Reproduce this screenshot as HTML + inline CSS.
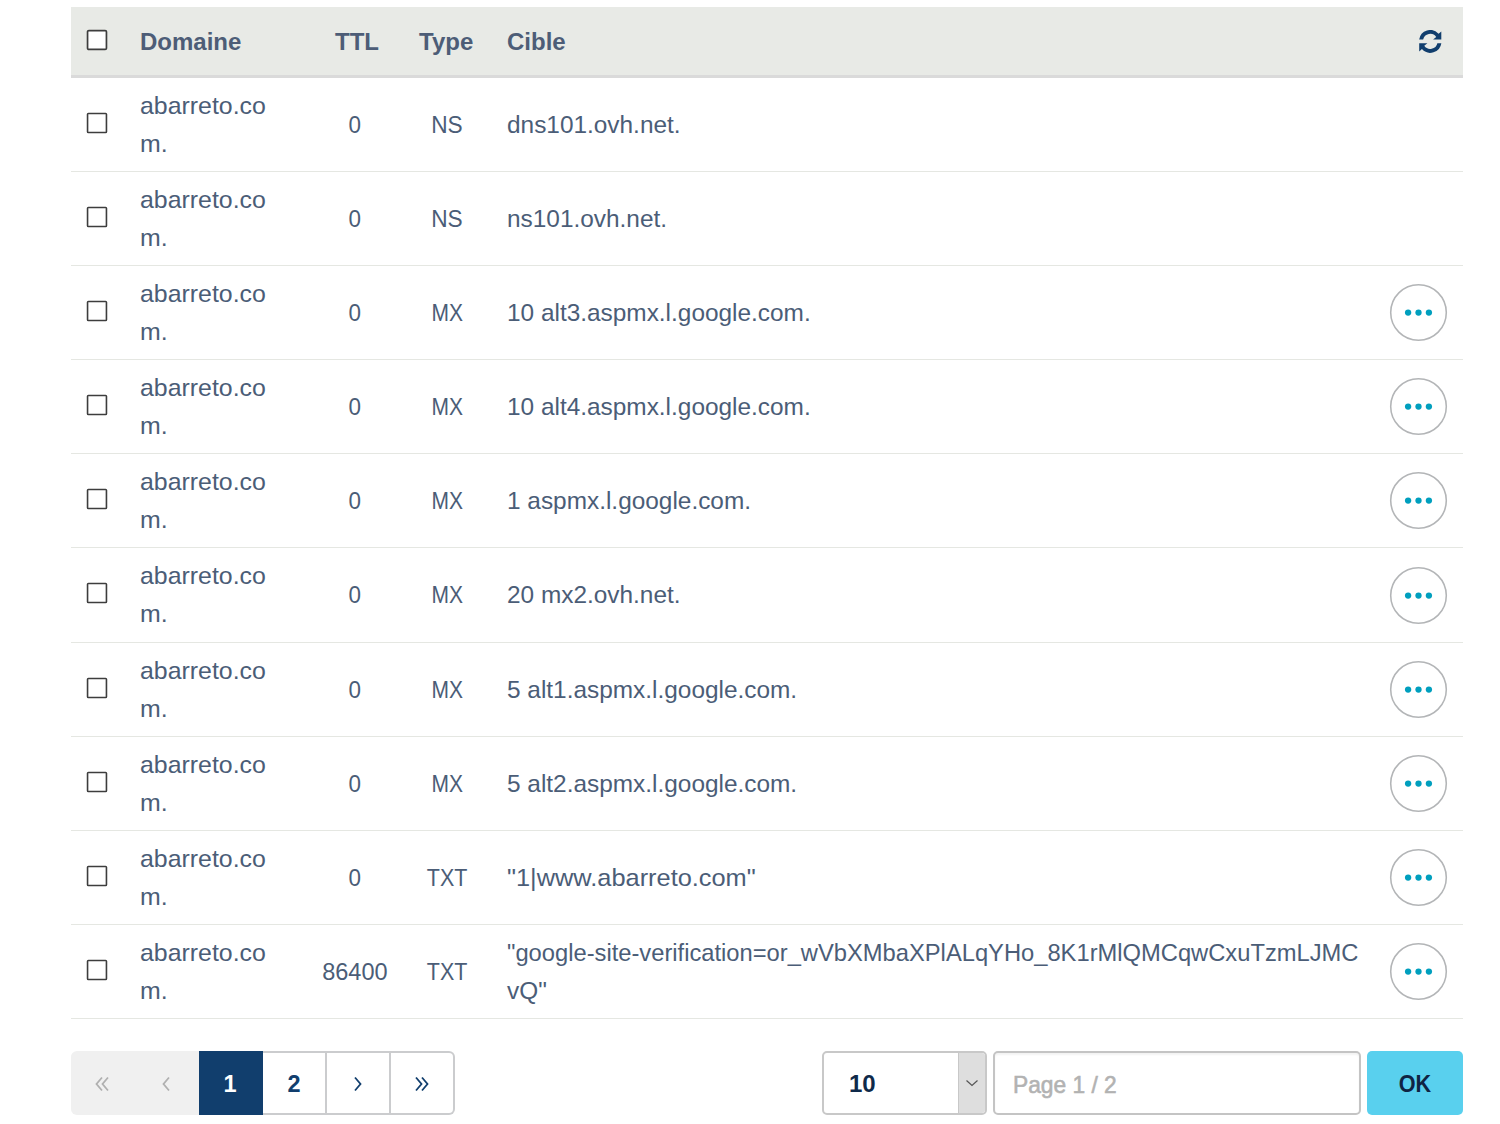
<!DOCTYPE html>
<html><head><meta charset="utf-8">
<style>
*{box-sizing:border-box;margin:0;padding:0}
html,body{width:1500px;height:1124px;background:#fff;overflow:hidden;font-family:"Liberation Sans",sans-serif;position:relative}
.hdr{position:absolute;left:71px;top:7px;width:1392px;height:71px;background:#e8eae6;border-bottom:3px solid #dadada}
.hdr .t{position:absolute;top:23px;font-weight:bold;font-size:24px;color:#4d5d77;line-height:24px;white-space:nowrap}
.hdr .cbs{left:14.05px}
.ref{position:absolute;left:1347.7px;top:23.3px}
.line{position:absolute;left:71px;width:1392px;height:1px;background:#e5e7e2}
.cbs{position:absolute;left:85.05px}
.txt{position:absolute;font-size:24.4px;color:#4b5d77;white-space:nowrap}
.d{left:140px;line-height:38.4px;transform-origin:0 0;transform:scaleX(1.02)}
.n{line-height:26px;text-align:center}
.n span{display:inline-block;transform-origin:50% 50%}
.c span{display:inline-block;transform-origin:0 50%}
.ttl{left:305px;width:100px}
.typ{left:407px;width:80px}
.c{left:507px;line-height:26px}
.c2{line-height:38.4px}
.long{display:inline-block;transform-origin:0 0;transform:scaleX(0.9725)}
.dots{position:absolute;left:1388px}
.pg{position:absolute;left:71px;top:1051px;width:384px;height:64px}
.pc{position:absolute;top:0;width:64px;height:64px;border:2px solid #cbccce;border-left:none;background:#fff;color:#113e6d;font-size:23.5px;font-weight:bold;text-align:center;line-height:63px}
.pc.dis{background:#f0f0f0;border-color:#f0f0f0}
.pc.act{background:#113e6d;border-color:#113e6d;color:#fff}
.pc.last{border-radius:0 6px 6px 0}
.pc.first{border-radius:6px 0 0 6px}
.sel{position:absolute;left:822px;top:1051px;width:165px;height:64px;border:2px solid #c8c8c8;border-radius:5px;background:#fff}
.sel span{position:absolute;left:25px;top:18px;font-size:24px;font-weight:bold;color:#0f2a4a;line-height:26px}
.sel .arr{position:absolute;right:0;top:0;width:27px;height:60px;background:#dedede;border-left:1px solid #c8c8c8;border-radius:0 3px 3px 0}
.sel .arr svg{position:absolute;left:6px;top:26px}
.inp{position:absolute;left:993px;top:1051px;width:368px;height:64px;border:2px solid #c4c4c4;border-radius:5px;background:#fff;font-size:24px;font-weight:bold;color:#b2b2b2;padding-left:18px;line-height:63px;box-shadow:inset 0 2px 2px rgba(0,0,0,0.05)}
.inp span{display:inline-block;transform-origin:0 50%;transform:scaleX(0.948);font-weight:normal;-webkit-text-stroke:0.6px #b2b2b2}
.ok{position:absolute;left:1367px;top:1051px;width:96px;height:64px;background:#59d0ee;border-radius:5px;color:#0f2443;font-size:24px;font-weight:bold;text-align:center;line-height:65px}
.ok span{display:inline-block;transform:scaleX(0.9)}
</style></head><body>
<div class="hdr">
<svg class="cbs" width="24" height="24" style="top:20.70px"><rect x="2.55" y="2.55" width="18.9" height="18.9" rx="1.3" fill="#fff" stroke="#3d3d3d" stroke-width="1.7"/></svg>
<div class="t" style="left:69px">Domaine</div>
<div class="t" style="left:264px">TTL</div>
<div class="t" style="left:348px">Type</div>
<div class="t" style="left:436px">Cible</div>
<svg class="ref" width="23" height="23" viewBox="0 0 23 23"><path fill="#113e6d" d="M0.165 9.6A11.2 11.2 0 0 1 19.57 3.71L22.3 1.4V9.6H14.1L17.23 7.01A7.3 7.3 0 0 0 4.13 9.6Z"/><path fill="#113e6d" transform="rotate(180 11.25 11.4)" d="M0.165 9.6A11.2 11.2 0 0 1 19.57 3.71L22.3 1.4V9.6H14.1L17.23 7.01A7.3 7.3 0 0 0 4.13 9.6Z"/></svg>
</div>
<div class="line" style="top:171px"></div>
<svg class="cbs" width="24" height="24" style="top:110.70px"><rect x="2.55" y="2.55" width="18.9" height="18.9" rx="0.8" fill="#fff" stroke="#3d3d3d" stroke-width="1.6"/></svg><div class="txt d" style="top:86.5px">abarreto.co<br>m.</div><div class="txt n ttl" style="top:112px"><span style="transform:scaleX(0.92)">0</span></div><div class="txt n typ" style="top:112px"><span style="transform:scaleX(0.93)">NS</span></div><div class="txt c" style="top:112px"><span style="transform:scaleX(1.0)">dns101.ovh.net.</span></div>
<div class="line" style="top:265px"></div>
<svg class="cbs" width="24" height="24" style="top:204.70px"><rect x="2.55" y="2.55" width="18.9" height="18.9" rx="0.8" fill="#fff" stroke="#3d3d3d" stroke-width="1.6"/></svg><div class="txt d" style="top:180.5px">abarreto.co<br>m.</div><div class="txt n ttl" style="top:206px"><span style="transform:scaleX(0.92)">0</span></div><div class="txt n typ" style="top:206px"><span style="transform:scaleX(0.93)">NS</span></div><div class="txt c" style="top:206px"><span style="transform:scaleX(1.0)">ns101.ovh.net.</span></div>
<div class="line" style="top:359px"></div>
<svg class="cbs" width="24" height="24" style="top:298.70px"><rect x="2.55" y="2.55" width="18.9" height="18.9" rx="0.8" fill="#fff" stroke="#3d3d3d" stroke-width="1.6"/></svg><div class="txt d" style="top:274.5px">abarreto.co<br>m.</div><div class="txt n ttl" style="top:300px"><span style="transform:scaleX(0.92)">0</span></div><div class="txt n typ" style="top:300px"><span style="transform:scaleX(0.86)">MX</span></div><div class="txt c" style="top:300px"><span style="transform:scaleX(1.0)">10 alt3.aspmx.l.google.com.</span></div><svg class="dots" width="61" height="61" style="top:282.00px"><circle cx="30.5" cy="30.5" r="27.8" fill="#fff" stroke="#b3b5b7" stroke-width="1.55"/><circle cx="20.1" cy="30.6" r="3.15" fill="#009fbe"/><circle cx="30.5" cy="30.6" r="3.15" fill="#009fbe"/><circle cx="40.9" cy="30.6" r="3.15" fill="#009fbe"/></svg>
<div class="line" style="top:453px"></div>
<svg class="cbs" width="24" height="24" style="top:392.70px"><rect x="2.55" y="2.55" width="18.9" height="18.9" rx="0.8" fill="#fff" stroke="#3d3d3d" stroke-width="1.6"/></svg><div class="txt d" style="top:368.5px">abarreto.co<br>m.</div><div class="txt n ttl" style="top:394px"><span style="transform:scaleX(0.92)">0</span></div><div class="txt n typ" style="top:394px"><span style="transform:scaleX(0.86)">MX</span></div><div class="txt c" style="top:394px"><span style="transform:scaleX(1.0)">10 alt4.aspmx.l.google.com.</span></div><svg class="dots" width="61" height="61" style="top:376.00px"><circle cx="30.5" cy="30.5" r="27.8" fill="#fff" stroke="#b3b5b7" stroke-width="1.55"/><circle cx="20.1" cy="30.6" r="3.15" fill="#009fbe"/><circle cx="30.5" cy="30.6" r="3.15" fill="#009fbe"/><circle cx="40.9" cy="30.6" r="3.15" fill="#009fbe"/></svg>
<div class="line" style="top:547px"></div>
<svg class="cbs" width="24" height="24" style="top:486.70px"><rect x="2.55" y="2.55" width="18.9" height="18.9" rx="0.8" fill="#fff" stroke="#3d3d3d" stroke-width="1.6"/></svg><div class="txt d" style="top:462.5px">abarreto.co<br>m.</div><div class="txt n ttl" style="top:488px"><span style="transform:scaleX(0.92)">0</span></div><div class="txt n typ" style="top:488px"><span style="transform:scaleX(0.86)">MX</span></div><div class="txt c" style="top:488px"><span style="transform:scaleX(1.0)">1 aspmx.l.google.com.</span></div><svg class="dots" width="61" height="61" style="top:470.00px"><circle cx="30.5" cy="30.5" r="27.8" fill="#fff" stroke="#b3b5b7" stroke-width="1.55"/><circle cx="20.1" cy="30.6" r="3.15" fill="#009fbe"/><circle cx="30.5" cy="30.6" r="3.15" fill="#009fbe"/><circle cx="40.9" cy="30.6" r="3.15" fill="#009fbe"/></svg>
<div class="line" style="top:642px"></div>
<svg class="cbs" width="24" height="24" style="top:581.20px"><rect x="2.55" y="2.55" width="18.9" height="18.9" rx="0.8" fill="#fff" stroke="#3d3d3d" stroke-width="1.6"/></svg><div class="txt d" style="top:556.5px">abarreto.co<br>m.</div><div class="txt n ttl" style="top:582px"><span style="transform:scaleX(0.92)">0</span></div><div class="txt n typ" style="top:582px"><span style="transform:scaleX(0.86)">MX</span></div><div class="txt c" style="top:582px"><span style="transform:scaleX(1.0)">20 mx2.ovh.net.</span></div><svg class="dots" width="61" height="61" style="top:564.50px"><circle cx="30.5" cy="30.5" r="27.8" fill="#fff" stroke="#b3b5b7" stroke-width="1.55"/><circle cx="20.1" cy="30.6" r="3.15" fill="#009fbe"/><circle cx="30.5" cy="30.6" r="3.15" fill="#009fbe"/><circle cx="40.9" cy="30.6" r="3.15" fill="#009fbe"/></svg>
<div class="line" style="top:736px"></div>
<svg class="cbs" width="24" height="24" style="top:675.70px"><rect x="2.55" y="2.55" width="18.9" height="18.9" rx="0.8" fill="#fff" stroke="#3d3d3d" stroke-width="1.6"/></svg><div class="txt d" style="top:651.5px">abarreto.co<br>m.</div><div class="txt n ttl" style="top:677px"><span style="transform:scaleX(0.92)">0</span></div><div class="txt n typ" style="top:677px"><span style="transform:scaleX(0.86)">MX</span></div><div class="txt c" style="top:677px"><span style="transform:scaleX(1.0)">5 alt1.aspmx.l.google.com.</span></div><svg class="dots" width="61" height="61" style="top:659.00px"><circle cx="30.5" cy="30.5" r="27.8" fill="#fff" stroke="#b3b5b7" stroke-width="1.55"/><circle cx="20.1" cy="30.6" r="3.15" fill="#009fbe"/><circle cx="30.5" cy="30.6" r="3.15" fill="#009fbe"/><circle cx="40.9" cy="30.6" r="3.15" fill="#009fbe"/></svg>
<div class="line" style="top:830px"></div>
<svg class="cbs" width="24" height="24" style="top:769.70px"><rect x="2.55" y="2.55" width="18.9" height="18.9" rx="0.8" fill="#fff" stroke="#3d3d3d" stroke-width="1.6"/></svg><div class="txt d" style="top:745.5px">abarreto.co<br>m.</div><div class="txt n ttl" style="top:771px"><span style="transform:scaleX(0.92)">0</span></div><div class="txt n typ" style="top:771px"><span style="transform:scaleX(0.86)">MX</span></div><div class="txt c" style="top:771px"><span style="transform:scaleX(1.0)">5 alt2.aspmx.l.google.com.</span></div><svg class="dots" width="61" height="61" style="top:753.00px"><circle cx="30.5" cy="30.5" r="27.8" fill="#fff" stroke="#b3b5b7" stroke-width="1.55"/><circle cx="20.1" cy="30.6" r="3.15" fill="#009fbe"/><circle cx="30.5" cy="30.6" r="3.15" fill="#009fbe"/><circle cx="40.9" cy="30.6" r="3.15" fill="#009fbe"/></svg>
<div class="line" style="top:924px"></div>
<svg class="cbs" width="24" height="24" style="top:863.70px"><rect x="2.55" y="2.55" width="18.9" height="18.9" rx="0.8" fill="#fff" stroke="#3d3d3d" stroke-width="1.6"/></svg><div class="txt d" style="top:839.5px">abarreto.co<br>m.</div><div class="txt n ttl" style="top:865px"><span style="transform:scaleX(0.92)">0</span></div><div class="txt n typ" style="top:865px"><span style="transform:scaleX(0.88)">TXT</span></div><div class="txt c" style="top:865px"><span style="transform:scaleX(1.04)">"1|www.abarreto.com"</span></div><svg class="dots" width="61" height="61" style="top:847.00px"><circle cx="30.5" cy="30.5" r="27.8" fill="#fff" stroke="#b3b5b7" stroke-width="1.55"/><circle cx="20.1" cy="30.6" r="3.15" fill="#009fbe"/><circle cx="30.5" cy="30.6" r="3.15" fill="#009fbe"/><circle cx="40.9" cy="30.6" r="3.15" fill="#009fbe"/></svg>
<div class="line" style="top:1018px"></div>
<svg class="cbs" width="24" height="24" style="top:957.70px"><rect x="2.55" y="2.55" width="18.9" height="18.9" rx="0.8" fill="#fff" stroke="#3d3d3d" stroke-width="1.6"/></svg><div class="txt d" style="top:933.5px">abarreto.co<br>m.</div><div class="txt n ttl" style="top:959px"><span style="transform:scaleX(0.965)">86400</span></div><div class="txt n typ" style="top:959px"><span style="transform:scaleX(0.88)">TXT</span></div><div class="txt c c2" style="top:933.5px"><span class="long">"google-site-verification=or_wVbXMbaXPlALqYHo_8K1rMlQMCqwCxuTzmLJMC</span><br>vQ"</div><svg class="dots" width="61" height="61" style="top:941.00px"><circle cx="30.5" cy="30.5" r="27.8" fill="#fff" stroke="#b3b5b7" stroke-width="1.55"/><circle cx="20.1" cy="30.6" r="3.15" fill="#009fbe"/><circle cx="30.5" cy="30.6" r="3.15" fill="#009fbe"/><circle cx="40.9" cy="30.6" r="3.15" fill="#009fbe"/></svg>
<div class="pg">
<div class="pc dis first" style="left:0"><svg width="16" height="16" style="position:absolute;left:24px;top:22.5px"><polyline points="7,1.5 1.5,8 7,14.5" fill="none" stroke="#b0b0b0" stroke-width="1.8"/><polyline points="13,1.5 7.5,8 13,14.5" fill="none" stroke="#b0b0b0" stroke-width="1.8"/></svg></div>
<div class="pc dis" style="left:64px"><svg width="16" height="16" style="position:absolute;left:25px;top:22.5px"><polyline points="9,1.5 3.5,8 9,14.5" fill="none" stroke="#b0b0b0" stroke-width="1.8"/></svg></div>
<div class="pc act" style="left:128px">1</div>
<div class="pc" style="left:192px">2</div>
<div class="pc" style="left:256px"><svg width="16" height="16" style="position:absolute;left:23px;top:22.5px"><polyline points="5,1.5 10.5,8 5,14.5" fill="none" stroke="#113e6d" stroke-width="1.8"/></svg></div>
<div class="pc last" style="left:320px"><svg width="16" height="16" style="position:absolute;left:22px;top:22.5px"><polyline points="3,1.5 8.5,8 3,14.5" fill="none" stroke="#113e6d" stroke-width="1.8"/><polyline points="9,1.5 14.5,8 9,14.5" fill="none" stroke="#113e6d" stroke-width="1.8"/></svg></div>
</div>
<div class="sel"><span>10</span><div class="arr"><svg width="14" height="8" viewBox="0 0 14 8"><path d="M1.5 1.5l5.5 5 5.5-5" fill="none" stroke="#555" stroke-width="1.2"/></svg></div></div>
<div class="inp"><span>Page 1 / 2</span></div>
<div class="ok"><span>OK</span></div>
</body></html>
